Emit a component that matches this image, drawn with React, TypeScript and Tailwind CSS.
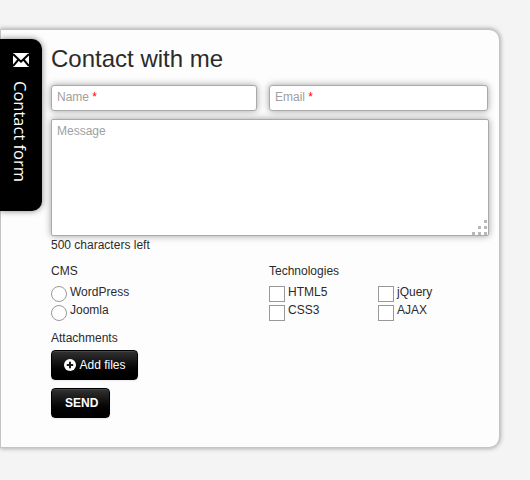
import React from 'react';

const field =
  'block border border-[#aaa] bg-white shadow-[0_0_7px_rgba(0,0,0,0.38)] text-[#a0a0a0] pl-[5px]';

function Option({ label, round, second }: { label: string; round?: boolean; second?: boolean }) {
  return (
    <label className="flex h-[19px] gap-[3px]">
      <span
        className={
          'mt-[2px] h-4 w-4 shrink-0 border border-[#999] bg-white ' + (round ? 'rounded-full' : '')
        }
      />
      <span className={'h-[18px] ' + (second ? 'leading-[14px]' : 'leading-[16px]')}>{label}</span>
    </label>
  );
}

function PlusCircle() {
  return (
    <svg width="12" height="12" viewBox="0 0 12 12" className="-mt-px shrink-0">
      <circle cx="6" cy="6" r="6" fill="#fff" />
      <path d="M6 2.8v6.4M2.8 6h6.4" stroke="#1a1a1a" strokeWidth="2" />
    </svg>
  );
}

function Envelope() {
  return (
    <svg width="16" height="14" viewBox="0 0 16 14" className="mr-px shrink-0">
      <rect width="16" height="14" fill="#fff" />
      <path d="M0 1L8 8.7L16 1M0 13L5.5 6.5M16 13L10.5 6.5" fill="none" stroke="#000" strokeWidth="2" />
    </svg>
  );
}

const button =
  'flex h-[30px] items-center rounded-[4px] border border-black bg-linear-to-b from-[#333] to-black text-white shadow-[inset_0_1px_0_rgba(255,255,255,0.1),0_1px_2px_rgba(0,0,0,0.08)]';

export default function App() {
  return (
    <div className="h-[480px] w-[530px] overflow-hidden bg-[#f4f4f4] pt-[29px] font-['Liberation_Sans',Arial,sans-serif] text-[12px] leading-[18px] text-[#2b2b2b]">
      <main className="flex h-[419px] w-[500px] items-start rounded-r-[11px] border border-[#c4c4c4] bg-[#fdfdfd] shadow-[0_0_5px_rgba(0,0,0,0.4)]">
        <aside className="-ml-px mt-[9px] flex h-[172px] w-[42px] shrink-0 flex-col items-center rounded-r-[10px] bg-black pt-[14px] text-white shadow-[0_0_6px_rgba(0,0,0,0.5)]">
          <Envelope />
          <span className="mt-[14px] mr-[2px] font-['Open_Sans','Noto_Sans',sans-serif] text-[16.5px] leading-[22px] whitespace-nowrap [writing-mode:vertical-rl]">
            Contact form
          </span>
        </aside>
        <form className="ml-[9px] w-[438px]">
          <h1 className="mt-[14px] h-[41px] text-[24px] leading-[30px]">Contact with me</h1>
          <div className="flex gap-[12px]">
            <div className={field + ' h-[26px] w-[206px] rounded-[3px] leading-[22px]'}>
              Name <span className="text-[#f00]">*</span>
            </div>
            <div className={field + ' h-[26px] w-[219px] rounded-[3px] leading-[22px]'}>
              Email <span className="text-[#f00]">*</span>
            </div>
          </div>
          <div className={field + ' mt-[8px] flex h-[117px] w-[438px] items-end justify-between rounded-[2px]'}>
            <span className="self-start leading-[22px]">Message</span>
            <svg width="16" height="16" viewBox="0 0 16 16" fill="#b8b8b8">
              <path d="M12 1h3v3h-3zM6 7h3v3H6zM12 7h3v3h-3zM0 13h3v3H0zM6 13h3v3H6zM12 13h3v3h-3z" />
            </svg>
          </div>
          <p>500 characters left</p>
          <div className="mt-[8px] flex">
            <div className="w-[218px]">
              <div className="h-[22px]">CMS</div>
              <Option round label="WordPress" />
              <Option round second label="Joomla" />
            </div>
            <div>
              <div className="h-[22px]">Technologies</div>
              <div className="grid grid-cols-[109px_109px]">
                <Option label="HTML5" />
                <Option label="jQuery" />
                <Option second label="CSS3" />
                <Option second label="AJAX" />
              </div>
            </div>
          </div>
          <div className="mt-[7px]">Attachments</div>
          <div className={button + ' mt-[3px] w-[87px] gap-[3.5px] pl-[12px]'}>
            <PlusCircle />
            <span>Add files</span>
          </div>
          <div className={button + ' mt-[8px] w-[59px] pl-[13px] font-bold'}>SEND</div>
        </form>
      </main>
    </div>
  );
}
